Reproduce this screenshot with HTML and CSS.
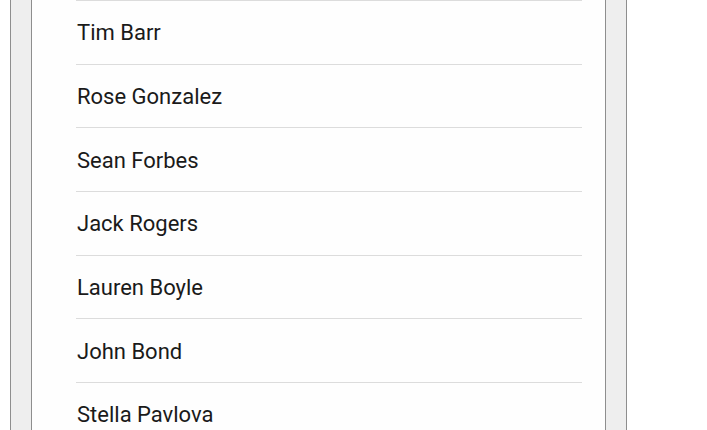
FILE: index.html
```html
<!DOCTYPE html>
<html>
<head>
<meta charset="utf-8">
<link rel="stylesheet" href="styles.css">
</head>
<body>
<div class="frame">
  <div class="sheet">
    <ul class="list">
      <li class="row">Tim Barr</li>
      <li class="row">Rose Gonzalez</li>
      <li class="row">Sean Forbes</li>
      <li class="row">Jack Rogers</li>
      <li class="row">Lauren Boyle</li>
      <li class="row">John Bond</li>
      <li class="row">Stella Pavlova</li>
    </ul>
  </div>
</div>
</body>
</html>
```
FILE: styles.css
```css
html, body {
  margin: 0;
  padding: 0;
  background: #ffffff;
  overflow: hidden;
}
body {
  height: 430px;
  font-family: Roboto, "Noto Sans", sans-serif;
}
.frame {
  margin-left: 10px;
  width: 617px;
  height: 430px;
  box-sizing: border-box;
  border-left: 1px solid #8e8e8e;
  border-right: 1px solid #8e8e8e;
  background: #eeeeee;
  padding: 0 20px;
}
.sheet {
  height: 100%;
  box-sizing: border-box;
  border-left: 1px solid #8e8e8e;
  border-right: 1px solid #8e8e8e;
  background: #fefefe;
  padding: 0 23px 0 44px;
}
.list {
  list-style: none;
  margin: 0;
  padding: 0;
  border-top: 1.5px solid #dcdcdc;
}
.row {
  height: 63.67px;
  box-sizing: border-box;
  display: flex;
  align-items: center;
  border-bottom: 1.5px solid #dcdcdc;
  font-size: 22px;
  color: #1a1a1a;
  padding-left: 1px;
  padding-top: 1px;
}
```
